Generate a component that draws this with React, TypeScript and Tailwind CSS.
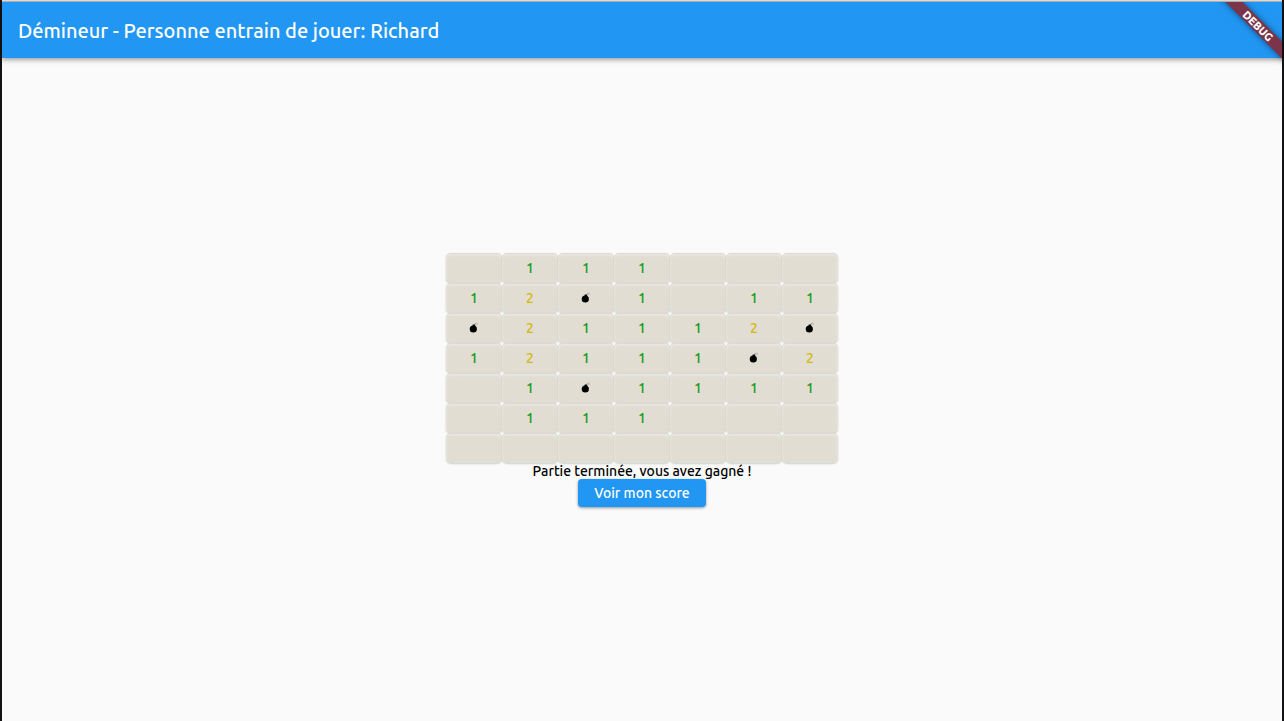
type Cell = 0 | 1 | 2 | 'bomb';

const B = 'bomb' as const;

const board: Cell[][] = [
  [0, 1, 1, 1, 0, 0, 0],
  [1, 2, B, 1, 0, 1, 1],
  [B, 2, 1, 1, 1, 2, B],
  [1, 2, 1, 1, 1, B, 2],
  [0, 1, B, 1, 1, 1, 1],
  [0, 1, 1, 1, 0, 0, 0],
  [0, 0, 0, 0, 0, 0, 0],
];

function Bomb() {
  return (
    <svg viewBox="0 0 10 12" className="h-3 w-[10px]" aria-hidden="true">
      <path d="M5 3.4C5 1.9 6 1.4 7.6 1.6" fill="none" stroke="#a19e95" strokeWidth="1" />
      <path d="M7.3 0l.5 1 1.4-.7-.6 1.3 1 .8-1.4.1-.2 1.3-.7-1.2-1.2.2.9-1z" fill="#bfbcb3" />
      <path d="M3.6 2.6h2.6v1.6H3.6z" fill="#000" />
      <circle cx="4.3" cy="7" r="3.6" fill="#000" />
    </svg>
  );
}

function Tile({ cell, row, col }: { cell: Cell; row: number; col: number }) {
  const color = cell === 2 ? 'text-[#d3b90b]' : 'text-[#0a990f]';
  const label = `Ligne ${row + 1}, colonne ${col + 1}`;
  return (
    <button
      type="button"
      aria-label={label}
      className={`flex h-[30px] w-14 items-center justify-center rounded-[5px] bg-[#e1ddd2] text-sm leading-4 font-medium shadow-[0_1px_2px_rgba(0,0,0,0.18),inset_0_1px_0_rgba(0,0,0,0.07),inset_0_2px_3px_rgba(255,255,255,0.45)] ${color}`}
    >
      {cell === 'bomb' ? <Bomb /> : cell === 0 ? null : cell}
    </button>
  );
}

function DebugBanner() {
  return (
    <div className="pointer-events-none absolute top-0 right-0 z-20 h-20 w-20 overflow-hidden">
      <div className="absolute top-[18px] -right-[26px] flex h-3 w-[100px] rotate-45 items-center justify-center bg-[#7b344a] text-[11px] leading-3 font-black text-white shadow-[0_0_6px_rgba(0,0,0,0.5)]">
        DEBUG
      </div>
    </div>
  );
}

export default function App() {
  return (
    <div className="flex min-h-screen flex-col border-x-2 border-[#131316] bg-[#fafafa] font-['Ubuntu','Noto_Sans',sans-serif]">
      <div className="h-[2px] border-b border-[#b9bcbe] bg-[#e6e5e3]" />
      <div className="relative flex grow flex-col">
        <header className="z-10 flex h-14 items-center bg-[#2196f3] px-4 pt-[2px] shadow-[0_2px_4px_rgba(0,0,0,0.28),0_1px_8px_rgba(0,0,0,0.12)]">
          <h1 className="text-xl font-medium text-white">Démineur - Personne entrain de jouer: Richard</h1>
        </header>
        <DebugBanner />
        <main className="flex grow flex-col items-center justify-center pb-[19px]">
          <div className="grid grid-cols-7">
            {board.map((cells, row) =>
              cells.map((cell, col) => <Tile key={`${row}-${col}`} cell={cell} row={row} col={col} />),
            )}
          </div>
          <p className="text-sm leading-4 font-medium text-black">Partie terminée, vous avez gagné !</p>
          <button
            type="button"
            className="h-7 rounded bg-[#2196f3] px-4 text-sm leading-4 font-medium text-white shadow-[0_1px_3px_rgba(0,0,0,0.4)]"
          >
            Voir mon score
          </button>
        </main>
      </div>
    </div>
  );
}
